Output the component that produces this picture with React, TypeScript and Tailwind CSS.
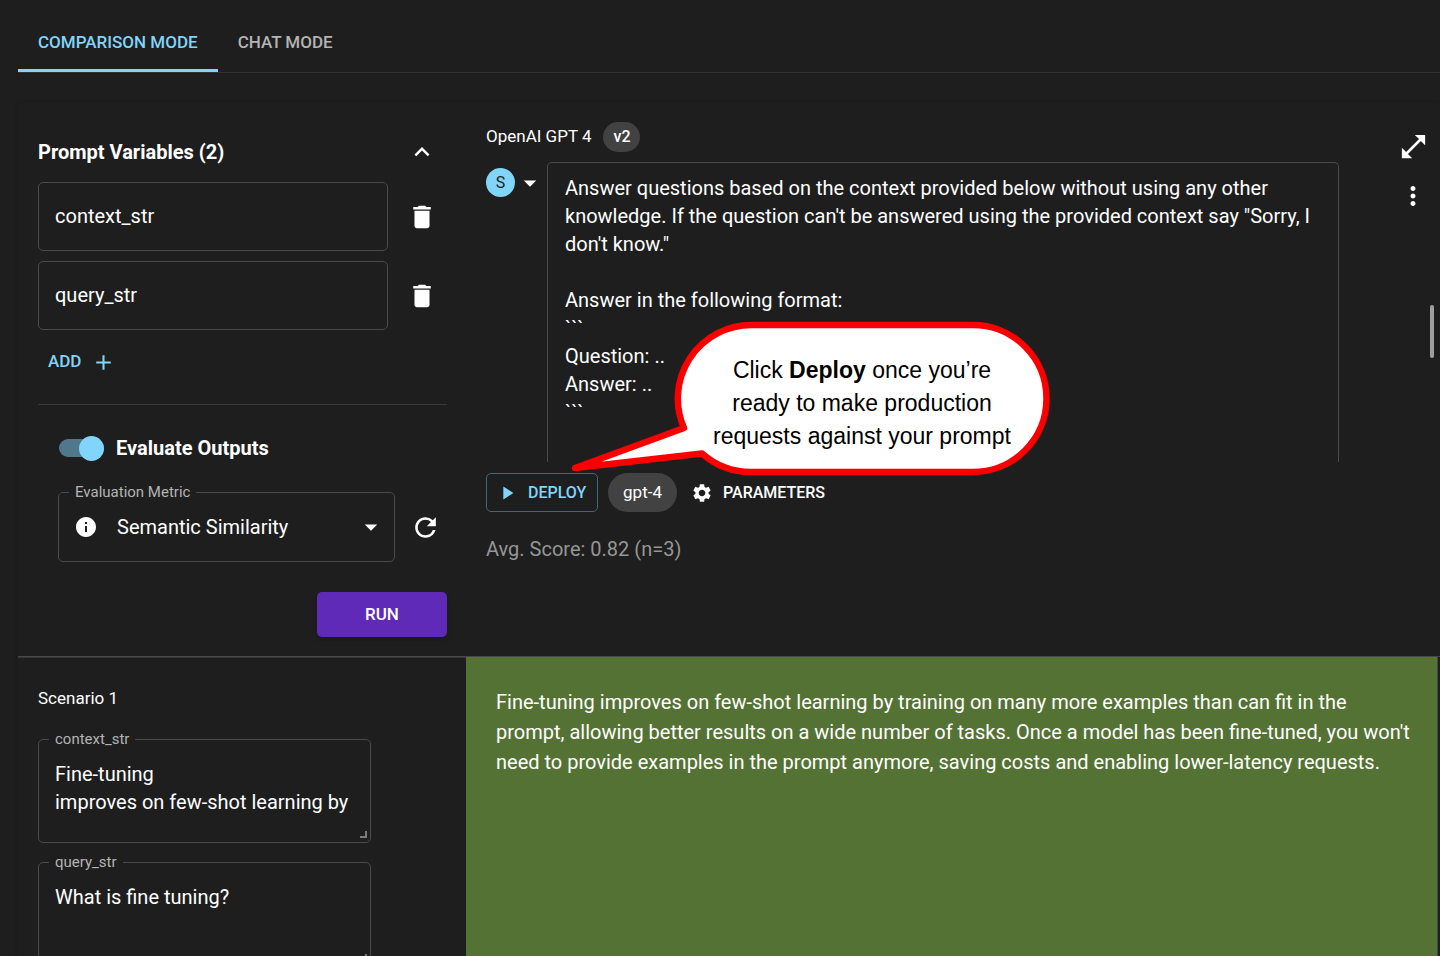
import React, { useState } from "react";
import {
  MdAdd,
  MdArrowDropDown,
  MdDelete,
  MdExpandLess,
  MdInfo,
  MdMoreVert,
  MdOpenInFull,
  MdPlayArrow,
  MdRefresh,
  MdSettings,
} from "react-icons/md";

const PROMPT = `Answer questions based on the context provided below without using any other knowledge. If the question can't be answered using the provided context say "Sorry, I don't know."

Answer in the following format:
\`\`\`
Question: ..
Answer: ..
\`\`\``;

function ModeTabs() {
  return (
    <nav className="flex h-[73px] border-b border-[#333333] pt-4 text-[17px] font-medium">
      <a
        href="#comparison"
        aria-current="page"
        className="flex items-center border-b-[3px] border-[#81d4fa] px-5 text-[#81d4fa]"
      >
        COMPARISON MODE
      </a>
      <a href="#chat" className="flex items-center border-b-[3px] border-transparent px-5 text-[#b4b4b4]">
        CHAT MODE
      </a>
    </nav>
  );
}

function VariableRow({ name }: { name: string }) {
  const [value, setValue] = useState(name);
  return (
    <div className="flex items-center">
      <input
        aria-label="Variable name"
        value={value}
        onChange={(e) => setValue(e.target.value)}
        className="h-[69px] w-[350px] rounded-[5px] border border-[#4a4a4a] bg-transparent px-4 pb-[2px] text-[20px] outline-none"
      />
      <button aria-label={`Delete ${name}`} className="ml-[19px]">
        <MdDelete size={30} />
      </button>
    </div>
  );
}

function ScenarioField({ id, initial }: { id: string; initial: string }) {
  const [value, setValue] = useState(initial);
  return (
    <fieldset className="relative h-[114px] w-[333px] rounded-[5px] border border-[#4a4a4a]">
      <legend className="ml-[10px] h-5 px-[6px] text-[15px] leading-5 text-[#b4b4b4]">
        <label htmlFor={id}>{id}</label>
      </legend>
      <textarea
        id={id}
        value={value}
        onChange={(e) => setValue(e.target.value)}
        className="block h-[92px] w-full resize-none overflow-hidden bg-transparent px-4 pt-[11px] text-[20px] leading-7 outline-none"
      />
      <svg className="absolute right-[2px] bottom-[2px]" width="9" height="8" viewBox="0 0 9 8" aria-hidden="true">
        <path d="M1 6h6V0" fill="none" stroke="#7a7a7a" strokeWidth="2" />
      </svg>
    </fieldset>
  );
}

function VariablesPanel() {
  return (
    <section className="flex flex-col pt-[34px] pr-[19px] pb-[19px] pl-5">
      <div className="flex h-[30px] items-center justify-between pr-[10px]">
        <h2 className="text-[20px] font-bold">Prompt Variables (2)</h2>
        <button aria-label="Collapse prompt variables">
          <MdExpandLess size={30} />
        </button>
      </div>
      <div className="mt-[15px] flex flex-col gap-[10px]">
        <VariableRow name="context_str" />
        <VariableRow name="query_str" />
      </div>
      <button className="mt-[10px] flex h-11 items-center gap-[10px] self-start px-[10px] text-[17px] font-medium text-[#81d4fa]">
        ADD
        <MdAdd size={25} />
      </button>
      <hr className="mt-5 border-[#3a3a3a]" />

      <label className="mt-7 ml-[21px] flex h-[30px] items-center gap-3 self-start text-[20px] font-bold">
        <input
          type="checkbox"
          role="switch"
          defaultChecked
          className="flex h-[18px] w-[45px] appearance-none items-center rounded-full bg-[#50788a] before:size-[25px] before:shrink-0 before:rounded-full before:bg-[#81d4fa] checked:justify-end"
        />
        Evaluate Outputs
      </label>

      <div className="mt-[19px] ml-5 flex items-center">
        <fieldset className="h-20 w-[337px] rounded-[5px] border border-[#4a4a4a]">
          <legend className="ml-[10px] h-5 px-[6px] text-[15px] leading-5 text-[#b4b4b4]">
            <label htmlFor="metric">Evaluation Metric</label>
          </legend>
          <div className="flex h-[50px] items-center pr-2 pl-[15px]">
            <MdInfo size={24} className="shrink-0" />
            <select
              id="metric"
              className="ml-[19px] h-full min-w-0 flex-1 appearance-none bg-transparent text-[20px] outline-none"
            >
              <option>Semantic Similarity</option>
            </select>
            <MdArrowDropDown size={30} className="shrink-0" />
          </div>
        </fieldset>
        <button aria-label="Refresh metric" className="mt-[10px] ml-[15px]">
          <MdRefresh size={31} />
        </button>
      </div>

      <button className="mt-[30px] h-[45px] w-[130px] self-end rounded-[5px] bg-[#5f2ab8] text-[17px] font-medium shadow-md">
        RUN
      </button>
    </section>
  );
}

function Callout() {
  return (
    <div className="pointer-events-none absolute top-[213px] left-[100px] h-[164px] w-[490px]">
      <svg className="absolute inset-0" width="490" height="164" viewBox="566 316 490 164" aria-hidden="true">
        <path
          d="M751 325H973A73.5 73.5 0 0 1 973 472H751A73.5 73.5 0 0 1 702 453.5L575 468L684 428A73.5 73.5 0 0 1 751 325Z"
          fill="#ffffff"
          stroke="#fa0000"
          strokeWidth="6.5"
          strokeLinejoin="round"
        />
      </svg>
      <p className="relative ml-[108px] w-[376px] px-8 pt-[38px] text-center font-['Liberation_Sans',sans-serif] text-[23px] leading-[33px] text-black">
        Click <b>Deploy</b> once you’re
        <br />
        ready to make production
        <br />
        requests against your prompt
      </p>
    </div>
  );
}

function PromptPanel() {
  const [prompt, setPrompt] = useState(PROMPT);
  return (
    <section className="relative flex">
      <div className="min-w-0 flex-1 pt-[19px] pr-[47px] pl-5">
        <div className="flex h-[30px] items-center gap-3">
          <h2 className="text-[17px]">OpenAI GPT 4</h2>
          <span className="flex h-[30px] w-[37px] items-center justify-center rounded-full bg-[#424242] text-[16px] font-medium">
            v2
          </span>
        </div>
        <div className="mt-[10px] flex">
          <button aria-label="Message role: system" className="mt-[6px] flex h-[29px] w-[61px] shrink-0 items-center">
            <span className="flex size-[29px] items-center justify-center rounded-full bg-[#81d4fa] text-[16px] text-[#1e1e1e]">
              S
            </span>
            <MdArrowDropDown size={30} />
          </button>
          <textarea
            aria-label="System prompt"
            value={prompt}
            onChange={(e) => setPrompt(e.target.value)}
            className="block h-[300px] min-w-0 flex-1 resize-none overflow-hidden rounded-t-[5px] border border-b-0 border-[#4a4a4a] bg-transparent px-[17px] pt-[11px] text-[20px] leading-7 outline-none"
          />
        </div>
        <div className="mt-[11px] flex h-[39px] items-center">
          <button className="flex h-[39px] w-[112px] items-center gap-[10px] rounded-[5px] border border-[#416779] pl-[9px] text-[16px] font-medium text-[#81d4fa]">
            <MdPlayArrow size={22} />
            DEPLOY
          </button>
          <span className="ml-[10px] flex h-[39px] w-[69px] items-center justify-center rounded-full bg-[#424242] text-[17px]">
            gpt-4
          </span>
          <button className="ml-[14px] flex items-center gap-[10px] text-[16px] font-medium">
            <MdSettings size={22} />
            PARAMETERS
          </button>
        </div>
        <p className="mt-[22px] text-[20px] leading-[30px] text-[#969696]">Avg. Score: 0.82 (n=3)</p>
      </div>
      <div className="flex w-[54px] shrink-0 flex-col items-center gap-[19px] pt-7">
        <button aria-label="Expand prompt">
          <MdOpenInFull size={31} />
        </button>
        <button aria-label="More options">
          <MdMoreVert size={30} />
        </button>
      </div>
      <Callout />
    </section>
  );
}

export default function App() {
  return (
    <div className="relative h-screen overflow-hidden bg-[#1e1e1e] pl-[18px] font-[Roboto,sans-serif] text-white">
      <ModeTabs />
      <main className="mt-[30px] shadow-[0_0_4px_rgba(0,0,0,0.15)]">
        <div className="grid grid-cols-[448px_minmax(0,1fr)] border-b border-[#484848]">
          <VariablesPanel />
          <PromptPanel />
        </div>
        <div className="grid grid-cols-[448px_minmax(0,1fr)]">
          <section className="border-t border-[#363636] pt-7 pb-5 pl-5">
            <h3 className="text-[17px] leading-6">Scenario 1</h3>
            <div className="mt-[19px] flex flex-col gap-[9px]">
              <ScenarioField id="context_str" initial={"Fine-tuning\nimproves on few-shot learning by"} />
              <ScenarioField id="query_str" initial="What is fine tuning?" />
            </div>
          </section>
          <p className="mr-[2px] border-r border-[#484848] bg-[#557235] pt-[30px] pr-6 pl-[30px] text-[20px] leading-[30px]">
            Fine-tuning improves on few-shot learning by training on many more examples than can fit in the prompt,
            allowing better results on a wide number of tasks. Once a model has been fine-tuned, you won't need to
            provide examples in the prompt anymore, saving costs and enabling lower-latency requests.
          </p>
        </div>
      </main>
      <div className="absolute top-[305px] right-[6px] h-[53px] w-1 rounded-full bg-[#9e9e9e]" />
    </div>
  );
}
